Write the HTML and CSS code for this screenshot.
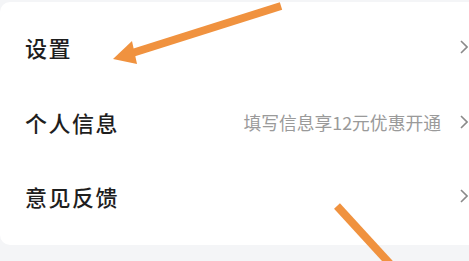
FILE: index.html
```html
<!DOCTYPE html>
<html lang="zh">
<head>
<meta charset="utf-8">
<link rel="stylesheet" href="styles.css">
</head>
<body>
<div class="card">
  <div class="row">
    <span class="label">设置</span>
    <span class="right"><svg class="chev" viewBox="0 0 8 14" width="8" height="14"><path d="M1 1 L7 7 L1 13" fill="none" stroke="#8a8a8a" stroke-width="1.6"/></svg></span>
  </div>
  <div class="row">
    <span class="label">个人信息</span>
    <span class="right"><span class="hint">填写信息享12元优惠开通</span><svg class="chev" viewBox="0 0 8 14" width="8" height="14"><path d="M1 1 L7 7 L1 13" fill="none" stroke="#8a8a8a" stroke-width="1.6"/></svg></span>
  </div>
  <div class="row">
    <span class="label">意见反馈</span>
    <span class="right"><svg class="chev" viewBox="0 0 8 14" width="8" height="14"><path d="M1 1 L7 7 L1 13" fill="none" stroke="#8a8a8a" stroke-width="1.6"/></svg></span>
  </div>
</div>
<svg class="arrows" width="469" height="261" viewBox="0 0 469 261">
  <line x1="281" y1="6" x2="126" y2="55" stroke="#f0923f" stroke-width="8" stroke-linecap="butt"/>
  <polygon points="113,59 132,41 137,64" fill="#f0923f"/>
  <line x1="337" y1="206" x2="392" y2="266" stroke="#f0923f" stroke-width="8"/>
</svg>
</body>
</html>
```
FILE: styles.css
```css
html, body {
  margin: 0;
  padding: 0;
}
body {
  width: 469px;
  height: 261px;
  overflow: hidden;
  background: #f4f5f7;
  font-family: "Noto Sans CJK SC", "Noto Sans", sans-serif;
  position: relative;
}
.card {
  margin-top: 2px;
  width: 480px;
  height: 243px;
  box-sizing: border-box;
  background: #ffffff;
  border-radius: 10px;
  padding: 8px 0 0 0;
}
.row {
  height: 74.5px;
  display: flex;
  align-items: center;
  justify-content: space-between;
  padding: 0 0 0 25px;
  width: 469px;
  box-sizing: border-box;
}
.label {
  font-size: 22px;
  font-weight: 500;
  color: #1e1e1e;
  letter-spacing: 1.5px;
}
.right {
  display: flex;
  align-items: center;
}
.hint {
  font-size: 17.8px;
  color: #9a9a9a;
  margin-right: 19px;
}
.chev {
  display: block;
  margin-right: 1px;
}
.arrows {
  position: absolute;
  left: 0;
  top: 0;
}
```
